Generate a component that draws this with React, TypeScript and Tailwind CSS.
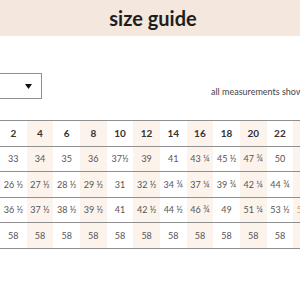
import React from 'react';

interface RowType {
    cells: string[];
    head?: boolean;
}

const sizes = ['2', '4', '6', '8', '10', '12', '14', '16', '18', '20', '22', ''];

const rows: RowType[] = [
    {cells: sizes, head: true},
    {cells: ['33', '34', '35', '36', '37½', '39', '41', '43 ¼', '45 ½', '47 ¾', '50', '']},
    {cells: ['26 ½', '27 ½', '28 ½', '29 ½', '31', '32 ½', '34 ¾', '37 ¼', '39 ¾', '42 ¼', '44 ¾', '']},
    {cells: ['36 ½', '37 ½', '38 ½', '39 ½', '41', '42 ½', '44 ½', '46 ¾', '49', '51 ¼', '53 ½', '55 ¾']},
    {cells: ['58', '58', '58', '58', '58', '58', '58', '58', '58', '58', '58', '']},
];

const App: React.FC = () => {
    return (
        <div className="w-[300px] h-[300px] overflow-hidden bg-white font-['Lato',sans-serif]">
            <div className="h-[36px] bg-[#f4e7de] flex items-center justify-center pl-[6px]">
                <h1 className="text-[20px] font-bold text-[#1e1e1e] leading-none">size guide</h1>
            </div>

            {/* controls: unit dropdown + note */}
            <div className="mt-[37px] flex items-end overflow-hidden">
                <div className="ml-[-60px] w-[102px] h-[26px] shrink-0 border border-[#8f8f8f] flex items-center justify-end pr-[9px]">
                    <svg width="7" height="5" viewBox="0 0 7 5">
                        <path d="M0 0 L7 0 L3.5 5 Z" fill="#111"/>
                    </svg>
                </div>
                <p className="ml-[169px] shrink-0 text-[9px] text-[#444] whitespace-nowrap leading-none mb-[3px]">
                    all measurements shown in inches
                </p>
            </div>

            <div className="mt-[21px] w-[320px] border-b border-[#8f8f8f]">
                {rows.map((row, r) => (
                    <div key={r} className="flex h-[25.6px] border-t border-[#8f8f8f]">
                        {row.cells.map((cell, c) => (
                            <div
                                key={c}
                                className={
                                    'w-[26.67px] shrink-0 flex items-center justify-center whitespace-nowrap ' +
                                    (c % 2 === 1 ? 'bg-[#fbf3ec] ' : '') +
                                    (row.head ? 'text-[10px] font-bold text-[#333]' : 'text-[9px] text-[#555]') +
                                    (c === 11 ? ' text-[#e0a060]' : '')
                                }
                            >
                                {cell}
                            </div>
                        ))}
                    </div>
                ))}
            </div>
        </div>
    );
};

export default App;
